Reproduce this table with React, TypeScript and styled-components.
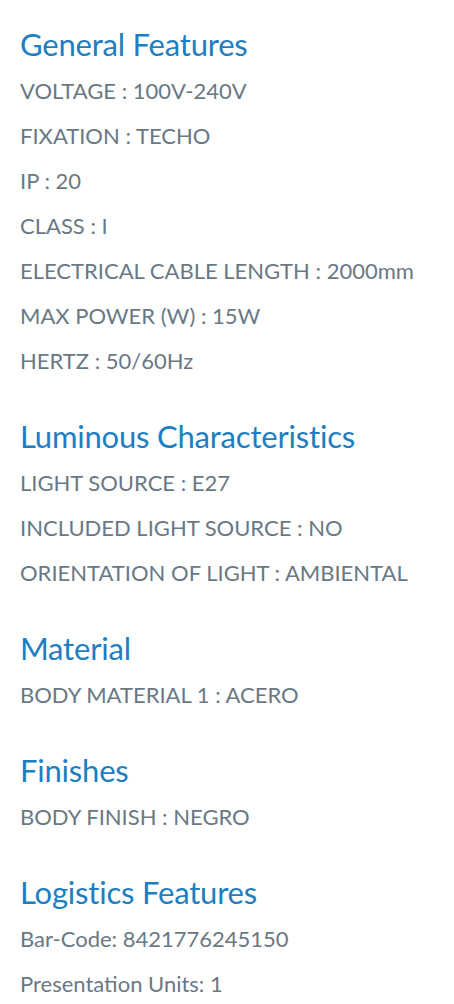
import * as React from "react"
import styled, { createGlobalStyle } from "styled-components"

const GlobalStyle = createGlobalStyle`
  body {
    margin: 0;
    background: #ffffff;
    font-family: Lato, "Open Sans", sans-serif;
  }
`

const Page = styled.div`
  padding: 24px 20px 0;
  display: flex;
  flex-direction: column;
  gap: 33px;
`

const Section = styled.section`
  display: flex;
  flex-direction: column;
`

const Title = styled.h3`
  margin: 0 0 4px;
  font-size: 31px;
  line-height: 40px;
  font-weight: 400;
  color: #1d7ec1;
  letter-spacing: -0.2px;
`

const Item = styled.p`
  margin: 0;
  font-size: 22px;
  line-height: 45px;
  color: #6a7884;
  white-space: nowrap;
`

const sections: { title: string; items: string[] }[] = [
  {
    title: "General Features",
    items: [
      "VOLTAGE : 100V-240V",
      "FIXATION : TECHO",
      "IP : 20",
      "CLASS : I",
      "ELECTRICAL CABLE LENGTH : 2000mm",
      "MAX POWER (W) : 15W",
      "HERTZ : 50/60Hz",
    ],
  },
  {
    title: "Luminous Characteristics",
    items: [
      "LIGHT SOURCE : E27",
      "INCLUDED LIGHT SOURCE : NO",
      "ORIENTATION OF LIGHT : AMBIENTAL",
    ],
  },
  { title: "Material", items: ["BODY MATERIAL 1 : ACERO"] },
  { title: "Finishes", items: ["BODY FINISH : NEGRO"] },
  {
    title: "Logistics Features",
    items: ["Bar-Code: 8421776245150", "Presentation Units: 1"],
  },
]

export default function App() {
  return (
    <>
      <GlobalStyle />
      <Page>
        {sections.map((s) => (
          <Section key={s.title}>
            <Title>{s.title}</Title>
            {s.items.map((it) => (
              <Item key={it}>{it}</Item>
            ))}
          </Section>
        ))}
      </Page>
    </>
  )
}
